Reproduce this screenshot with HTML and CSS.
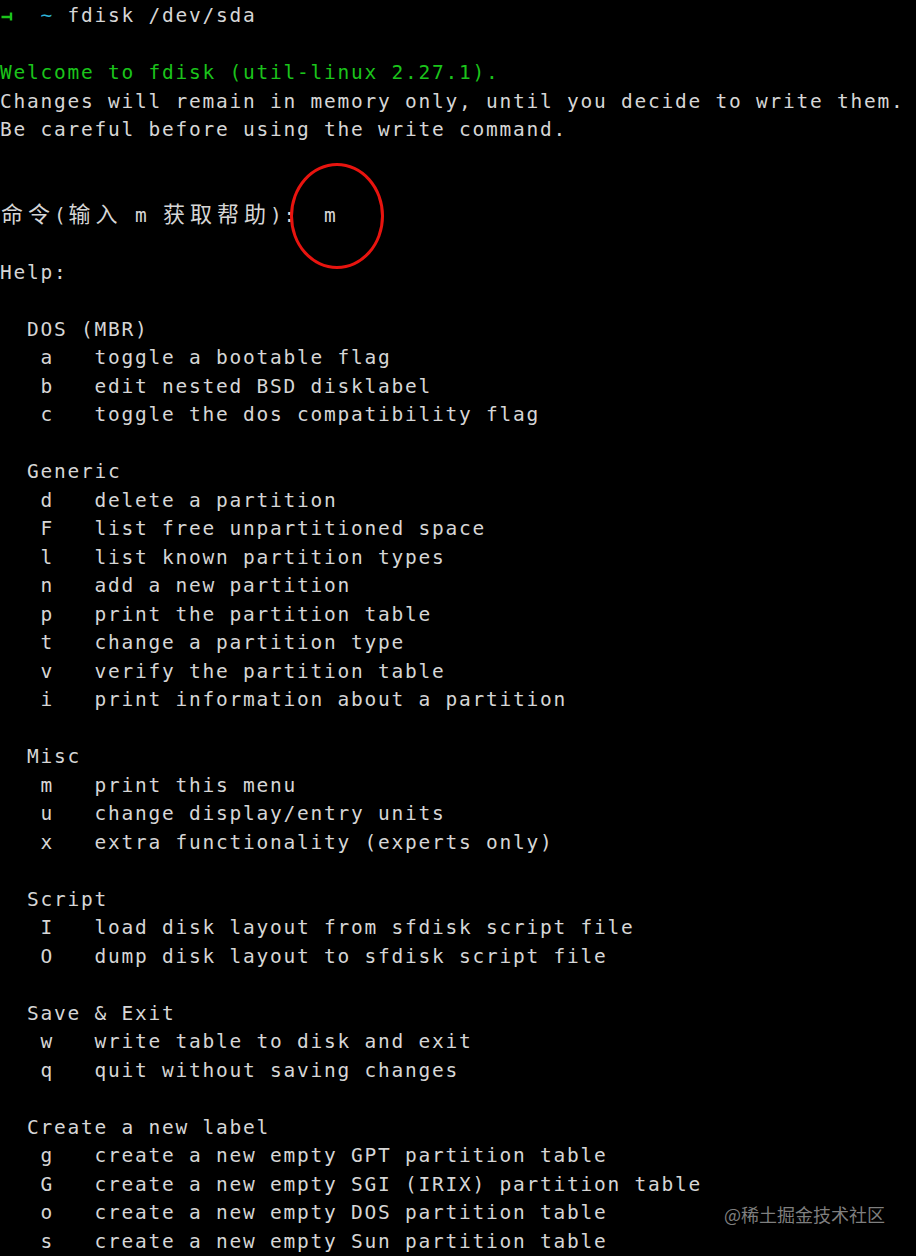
FILE: index.html
```html
<!DOCTYPE html>
<html lang="zh-CN">
<head>
<meta charset="utf-8">
<title>fdisk /dev/sda</title>
<link rel="stylesheet" href="styles.css">
</head>
<body>
<main class="terminal">
  <div class="screen">
    <div class="ln"><span class="prompt-arrow"><svg width="14" height="28" viewBox="0 0 14 28"><path d="M1.5 15H11.5M11 10.5V18.5" stroke="#1bc41b" stroke-width="2.4" fill="none"/></svg></span><span>  </span><span class="cyan">~</span><span> fdisk /dev/sda</span></div>
    <div class="ln"> </div>
    <div class="ln green">Welcome to fdisk (util-linux 2.27.1).</div>
    <div class="ln">Changes will remain in memory only, until you decide to write them.</div>
    <div class="ln">Be careful before using the write command.</div>
    <div class="ln"> </div>
    <div class="ln"> </div>
    <div class="ln"><span class="wide">命</span><span class="wide">令</span><span>(</span><span class="wide">输</span><span class="wide">入</span><span> m </span><span class="wide">获</span><span class="wide">取</span><span class="wide">帮</span><span class="wide">助</span><span>):  m</span></div>
    <div class="ln"> </div>
    <div class="ln">Help:</div>
    <div class="ln"> </div>
    <div class="ln">  DOS (MBR)</div>
    <div class="ln">   a   toggle a bootable flag</div>
    <div class="ln">   b   edit nested BSD disklabel</div>
    <div class="ln">   c   toggle the dos compatibility flag</div>
    <div class="ln"> </div>
    <div class="ln">  Generic</div>
    <div class="ln">   d   delete a partition</div>
    <div class="ln">   F   list free unpartitioned space</div>
    <div class="ln">   l   list known partition types</div>
    <div class="ln">   n   add a new partition</div>
    <div class="ln">   p   print the partition table</div>
    <div class="ln">   t   change a partition type</div>
    <div class="ln">   v   verify the partition table</div>
    <div class="ln">   i   print information about a partition</div>
    <div class="ln"> </div>
    <div class="ln">  Misc</div>
    <div class="ln">   m   print this menu</div>
    <div class="ln">   u   change display/entry units</div>
    <div class="ln">   x   extra functionality (experts only)</div>
    <div class="ln"> </div>
    <div class="ln">  Script</div>
    <div class="ln">   I   load disk layout from sfdisk script file</div>
    <div class="ln">   O   dump disk layout to sfdisk script file</div>
    <div class="ln"> </div>
    <div class="ln">  Save &amp; Exit</div>
    <div class="ln">   w   write table to disk and exit</div>
    <div class="ln">   q   quit without saving changes</div>
    <div class="ln"> </div>
    <div class="ln">  Create a new label</div>
    <div class="ln">   g   create a new empty GPT partition table</div>
    <div class="ln">   G   create a new empty SGI (IRIX) partition table</div>
    <div class="ln">   o   create a new empty DOS partition table</div>
    <div class="ln">   s   create a new empty Sun partition table</div>
  </div>
  <div class="highlight-ring"></div>
  <div class="watermark">@稀土掘金技术社区</div>
</main>
</body>
</html>
```
FILE: styles.css
```css
html, body {
  margin: 0;
  padding: 0;
  background: #000;
}

body {
  width: 916px;
  height: 1256px;
  overflow: hidden;
}

.terminal {
  position: relative;
  width: 916px;
  height: 1256px;
  background: #000;
}

.screen {
  display: flex;
  flex-direction: column;
  padding: 2px 0 0 0;
  font-family: "DejaVu Sans Mono", "Noto Sans CJK SC", monospace;
  font-size: 19.5px;
  letter-spacing: 1.76px;
  line-height: 28.5px;
  color: #d6d6d6;
}

.ln {
  height: 28.5px;
  white-space: pre;
}

.green {
  color: #1bc41b;
}

.cyan {
  color: #2fb4d8;
}

.prompt-arrow {
  display: inline-block;
  width: 13.5px;
  height: 28px;
  vertical-align: top;
  letter-spacing: 0;
}

.prompt-arrow svg {
  display: block;
}

.wide {
  display: inline-block;
  width: 27px;
  font-family: "Noto Sans CJK SC", sans-serif;
  font-size: 22px;
  letter-spacing: 0;
  line-height: 20px;
  text-indent: 1px;
}

.highlight-ring {
  position: absolute;
  left: 290px;
  top: 163px;
  width: 88px;
  height: 100px;
  border: 3px solid #e8140f;
  border-radius: 50%;
}

.watermark {
  position: absolute;
  left: 724px;
  top: 1202px;
  font-family: "Noto Sans CJK SC", sans-serif;
  font-size: 18px;
  line-height: 24px;
  color: rgba(170, 170, 170, 0.75);
  white-space: nowrap;
}
```
